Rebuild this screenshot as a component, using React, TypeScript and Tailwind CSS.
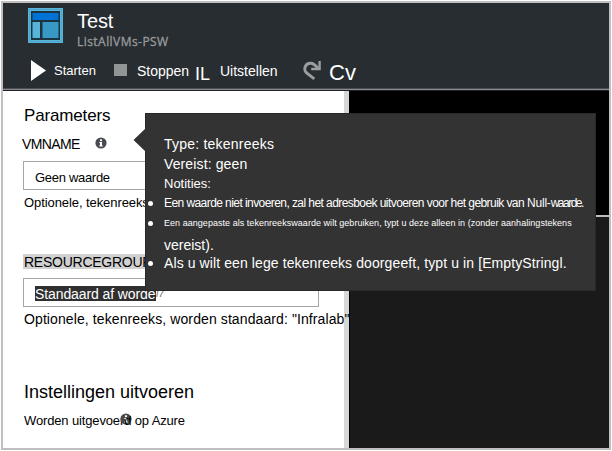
import React from "react";

function InfoIcon({ className = "" }: { className?: string }) {
  return (
    <svg viewBox="0 0 12 12" className={`h-3 w-3 shrink-0 ${className}`}>
      <circle cx="6" cy="6" r="5.6" fill="#474b4f" />
      <rect x="5" y="2.3" width="2" height="1.8" fill="#fff" />
      <path d="M4.3 5H7v3.4h.8v1H4.2v-1H5V6h-.7z" fill="#fff" />
    </svg>
  );
}

function RunbookIcon() {
  return (
    <svg viewBox="0 0 35 35" className="h-[35px] w-[35px] shrink-0">
      <rect width="35" height="35" fill="#59b4d9" />
      <rect x="1.5" y="1.5" width="32" height="32" fill="none" stroke="#4fa6cc" strokeWidth="1" />
      <rect x="3" y="3" width="29" height="29" fill="#1c3440" />
      <rect x="4.5" y="5" width="26" height="7" fill="#0072d6" />
      <rect x="4.5" y="14" width="7.5" height="16" fill="#59b4d9" />
      <rect x="14.5" y="14" width="16" height="16" fill="#3999c6" />
    </svg>
  );
}

function Header() {
  return (
    <header className="h-[88px] border-b border-[#202226] bg-[#282d31] text-white">
      <div className="flex h-[58px] pt-[5px] pl-[25px]">
        <RunbookIcon />
        <div className="ml-[14px]">
          <h1 className="h-[25px] text-[20px] leading-[26px] tracking-[-0.1px]">Test</h1>
          <p className="font-['Open_Sans',sans-serif] text-[12px] leading-[18px] tracking-[0.45px] text-[#989b9d] [-webkit-text-stroke:0.3px_#989b9d]">
            ListAllVMs-PSW
          </p>
        </div>
      </div>
      <nav className="flex h-[27px] items-start pl-[28px] whitespace-nowrap">
        <svg viewBox="0 0 15 21" className="-mt-px h-[21px] w-[15px] shrink-0">
          <path d="M0 0L15 10.5L0 21z" fill="#fff" />
        </svg>
        <span className="w-[61px] pl-2 text-[13px] leading-5">Starten</span>
        <span className="ml-[7px] mt-[3px] h-3 w-[13px] bg-[#929596]" />
        <span className="w-[68px] pl-[10px] text-[14px] leading-5">Stoppen</span>
        <span className="w-[25px] pt-[3px] text-[18px] leading-5">IL</span>
        <span className="w-[82px] text-[14px] leading-5">Uitstellen</span>
        <svg viewBox="0 0 20 20" className="h-5 w-5 shrink-0" fill="none" stroke="#9b9ea0" strokeWidth="2.9">
          <path d="M12.3 17.8L4.6 12C.8 8.3 3.3 2.2 8.4 2.2C11.5 2.2 13.7 4.2 16 7.3" />
          <path d="M17.6 0V8H9.2" strokeWidth="2.4" />
        </svg>
        <span className="ml-[7px] pt-[2px] text-[22px] leading-5">Cv</span>
      </nav>
      <div className="h-px bg-[#4b4f54]" />
      <div className="h-px bg-[#898b8d]" />
    </header>
  );
}

function ParametersPane() {
  return (
    <section className="h-full w-[341px] shrink-0 bg-white pt-[15px] pl-5 whitespace-nowrap text-black">
      <h2 className="h-5 pl-px text-[17px] leading-5 tracking-[-0.15px]">Parameters</h2>
      <div className="mt-[8px] flex h-5 text-[14px] leading-5 tracking-[-0.6px]">
        <span className="-ml-px w-[73px]">VMNAME</span>
        <InfoIcon className="mt-[3px]" />
      </div>
      <div className="mt-[7px] h-[29px] w-[296px] border border-[#a6a6a6] pt-[6px] pl-[11px] text-[13px] leading-5 tracking-[-0.3px]">
        Geen waarde
      </div>
      <p className="mt-[3px] h-5 pl-px text-[13px] leading-5 tracking-[-0.08px]">Optionele, tekenreeks</p>
      <div className="mt-[41px] h-4">
        <span className="block h-[15px] w-[124px] bg-[#d1d1d1] pl-px text-[14px] leading-[17px] tracking-[-0.25px]">
          RESOURCEGROUP
        </span>
      </div>
      <div className="mt-[8px] flex h-[29px] w-[296px] border border-[#a6a6a6] pt-[7px] pl-[11px]">
        <span className="h-[15px] w-[121px] bg-[#303030] text-[14px] leading-[17px] tracking-[-0.1px] text-white">
          Standaard af worde
        </span>
        <span className="text-[11px] leading-[15px] text-[#777] italic">i7</span>
      </div>
      <p className="mt-[2px] h-5 pl-px text-[14px] leading-5 tracking-[0.1px]">
        Optionele, tekenreeks, worden standaard: &quot;Infralab&quot;
      </p>
      <h2 className="mt-[53px] h-5 pl-px text-[18px] leading-5">Instellingen uitvoeren</h2>
      <div className="mt-[9px] flex h-5 pl-px text-[13px] leading-5 tracking-[-0.14px]">
        <span>Worden uitgevoer</span>
        <span className="relative">
          <InfoIcon className="absolute top-[2px] left-[-4px]" />
          <span className="relative">d</span>
        </span>
        <span className="whitespace-pre"> op Azure</span>
      </div>
    </section>
  );
}

function Bullet() {
  return <span className="mt-px mr-[11px] h-[5px] w-[5px] shrink-0 rounded-full bg-white" />;
}

function InfoTooltip() {
  return (
    <aside className="absolute top-[113px] left-[145px] h-[178px] w-[451px] border border-[#292929] bg-[#333] pt-[20px] pl-[2px] whitespace-nowrap text-white">
      <svg viewBox="0 0 13 24" className="absolute top-[14px] left-[-13px] h-6 w-[13px]">
        <path d="M13 0V24L0.5 12z" fill="#333" />
      </svg>
      <div className="pl-4 text-[14px] leading-5">
        <p className="h-5 tracking-[0.22px]">Type: tekenreeks</p>
        <p className="h-5 tracking-[0.12px]">Vereist: geen</p>
        <p className="h-5 text-[13px]">Notities:</p>
      </div>
      <ul>
        <li className="-mt-px flex h-5 items-center text-[12px] leading-5">
          <Bullet />
          <span className="w-[363px] tracking-[-0.57px]">
            Een waarde niet invoeren, zal het adresboek uitvoeren voor het gebruik van
          </span>
          <span className="tracking-[-0.2px]">Null-</span>
          <span className="tracking-[-1.5px]">waarde.</span>
        </li>
        <li className="text-[9px]">
          <div className="flex h-5 items-center leading-5 tracking-[0.04px]">
            <Bullet />
            Een aangepaste als tekenreekswaarde wilt gebruiken, typt u deze alleen in (zonder aanhalingstekens
          </div>
          <p className="mt-[2px] h-5 pl-4 text-[14px] leading-5">vereist).</p>
        </li>
        <li className="-mt-[2px] flex h-5 items-center text-[14px] leading-5 tracking-[0.1px]">
          <Bullet />
          Als u wilt een lege tekenreeks doorgeeft, typt u in [EmptyStringl.
        </li>
      </ul>
    </aside>
  );
}

export default function App() {
  return (
    <div className="relative h-[451px] w-[612px] overflow-hidden bg-white pt-px pl-px font-['Liberation_Sans',Arial,sans-serif]">
      <main className="flex h-[449px] w-[610px] flex-col border-2 border-[#c0c0c0]">
        <Header />
        <div className="flex min-h-0 flex-1">
          <div className="relative z-[1] h-full w-[341px]">
            <ParametersPane />
          </div>
          <div className="h-full w-[5px] bg-[#d5d7d9]" />
          <div className="flex h-full flex-1 flex-col border-l border-black">
            <div className="h-[124px] bg-black" />
            <div className="h-[2px] bg-[#bdbdbd]" />
            <div className="flex-1 bg-[#1a1a1a]" />
          </div>
        </div>
      </main>
      <div className="absolute top-0 left-0 z-[2]">
        <InfoTooltip />
      </div>
    </div>
  );
}
